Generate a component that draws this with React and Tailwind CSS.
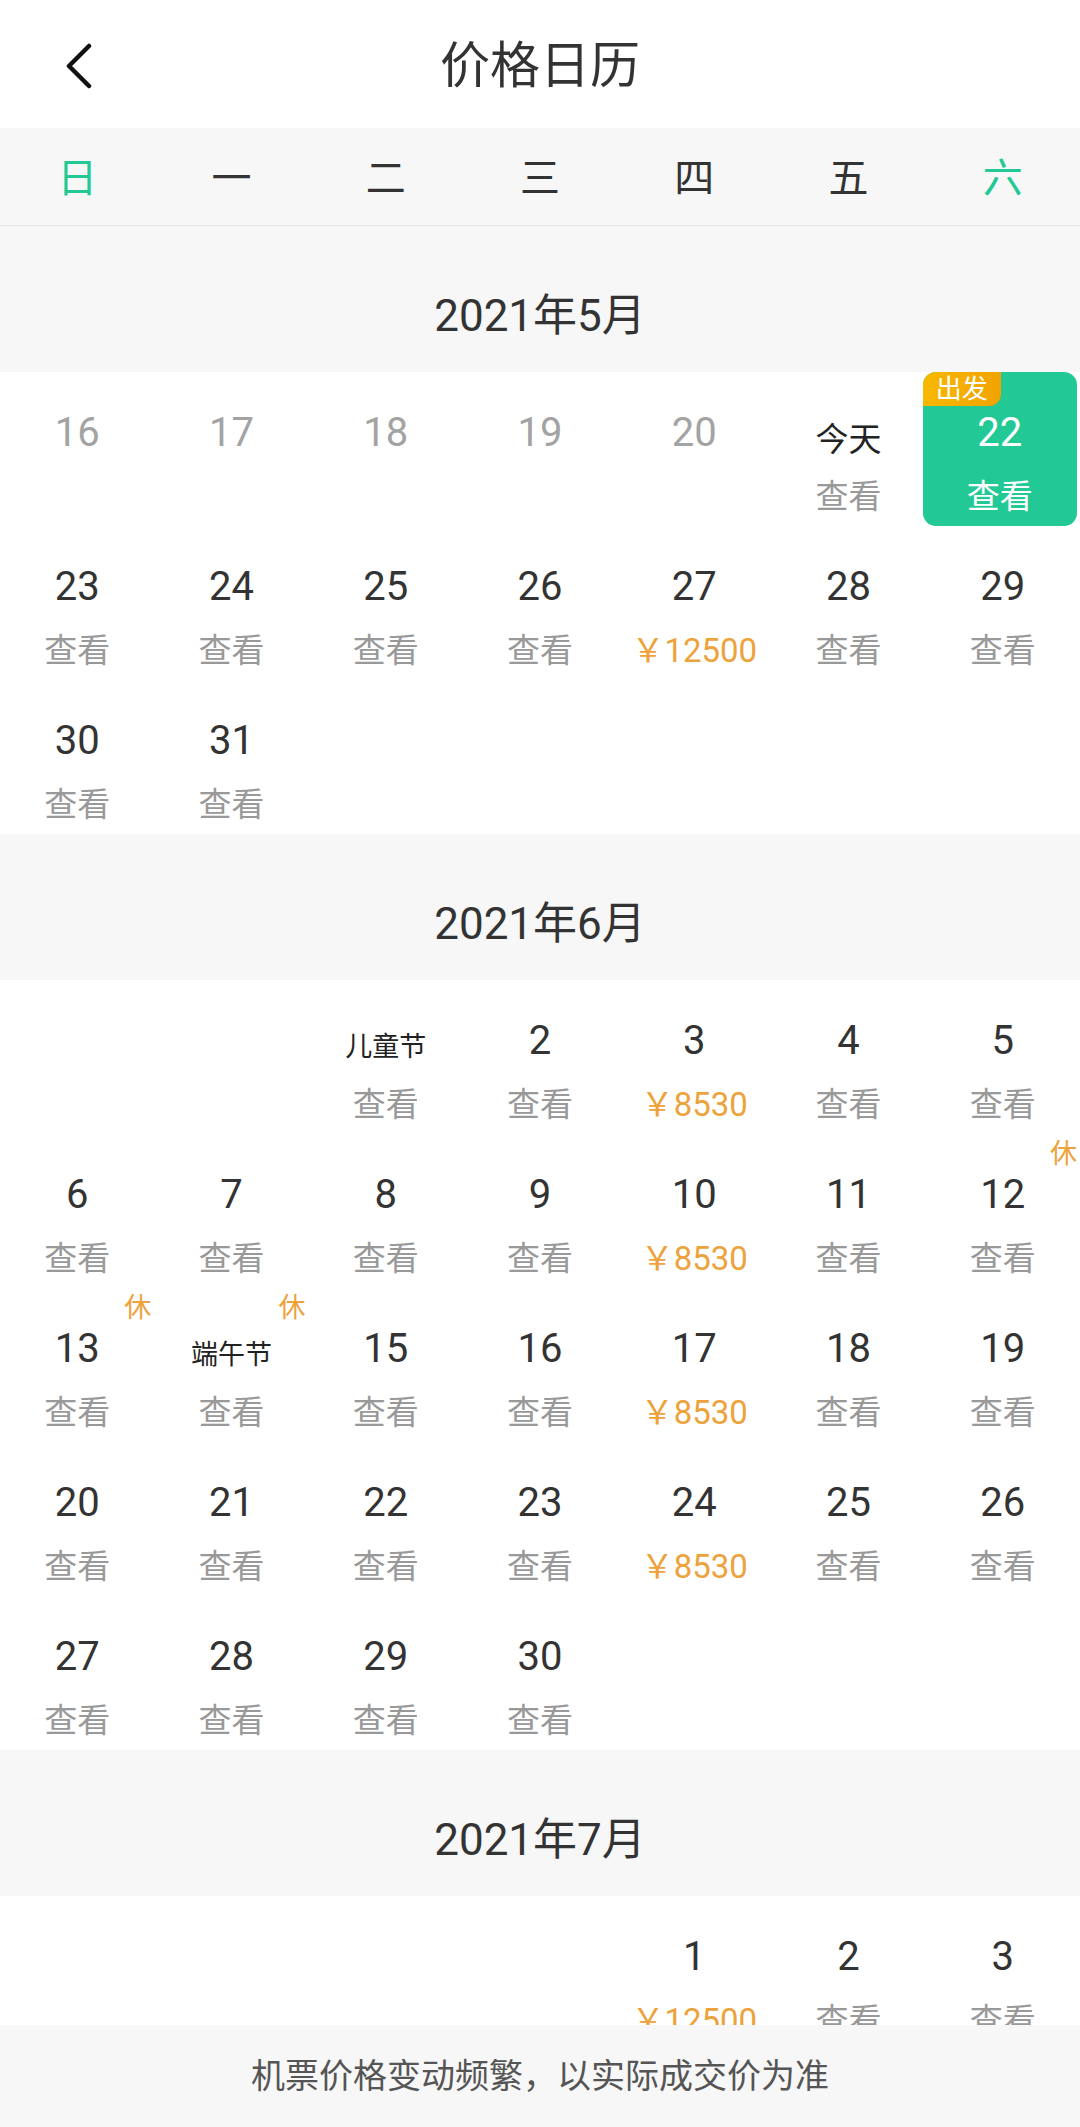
import React from "react";

const weekdays = ["日", "一", "二", "三", "四", "五", "六"];

// offset = empty cells before day 1 in the first shown week
const months = [
  { title: "2021年5月", start: 16, end: 31, offset: 0 },
  { title: "2021年6月", start: 1, end: 30, offset: 2 },
  { title: "2021年7月", start: 1, end: 3, offset: 4 },
];

const prices = {
  "5-27": "￥12500",
  "6-3": "￥8530",
  "6-10": "￥8530",
  "6-17": "￥8530",
  "6-24": "￥8530",
  "7-1": "￥12500",
};

const labels = {
  "5-21": { text: "今天", size: "text-[33px]" },
  "6-1": { text: "儿童节", size: "text-[27px]" },
  "6-14": { text: "端午节", size: "text-[27px]" },
};

const rest = ["6-12", "6-13", "6-14"];

function DayCell({ month, day }) {
  const key = `${month}-${day}`;
  const past = month === 5 && day <= 20;
  const selected = key === "5-22";
  const label = labels[key];
  const price = prices[key];

  return (
    <div
      className={`relative h-[154px] flex flex-col items-center pt-[38px] ${
        selected ? "bg-[#22c995] rounded-[13px] -ml-[3px] mr-[3px]" : ""
      }`}
    >
      {selected && (
        <div className="absolute left-0 top-0 w-[78px] h-[34px] bg-gradient-to-r from-[#f8b800] to-[#f1a300] rounded-tl-[13px] rounded-br-[12px] flex items-center justify-center text-white text-[26px] leading-none">
          出发
        </div>
      )}
      {rest.includes(key) && (
        <span className="absolute top-[7px] right-[3px] text-[27px] leading-none text-[#eda23c]">
          休
        </span>
      )}
      <div className="h-[46px] flex items-center justify-center">
        {label ? (
          <span className={`mt-[12px] leading-none text-[#222] ${label.size}`}>
            {label.text}
          </span>
        ) : (
          <span
            className={`text-[40px] leading-none ${
              selected ? "text-white" : past ? "text-[#a3a3a3]" : "text-[#333]"
            }`}
          >
            {day}
          </span>
        )}
      </div>
      {!past && (
        <div
          className={`mt-[21px] h-[40px] leading-[40px] text-[33px] ${
            selected ? "text-white" : price ? "text-[#eda23c]" : "text-[#999]"
          }`}
        >
          {price || "查看"}
        </div>
      )}
    </div>
  );
}

function Month({ month, index }) {
  const m = index + 5;
  const days = [];
  for (let d = month.start; d <= month.end; d++) days.push(d);

  return (
    <div>
      <div className="h-[146px] bg-[#f7f7f7] flex items-center justify-center pt-[34px] text-[44px] leading-none text-[#333]">
        {month.title}
      </div>
      <div className="grid grid-cols-7 bg-white">
        {Array.from({ length: month.offset }).map((_, i) => (
          <div key={`e${i}`} className="h-[154px]" />
        ))}
        {days.map((d) => (
          <DayCell key={d} month={m} day={d} />
        ))}
      </div>
    </div>
  );
}

export default function App() {
  return (
    <div className="w-[1080px] h-[2127px] flex flex-col bg-white font-['Roboto','Noto_Sans_CJK_SC',sans-serif]">
      {/* Header */}
      <div className="h-[128px] grid grid-cols-[128px_1fr_128px] items-center bg-white pt-[4px]">
        <div className="pl-[64px] flex items-center">
          <svg width="30" height="46" viewBox="0 0 30 46" fill="none">
            <path
              d="M25 3 L5 23 L25 43"
              stroke="#111"
              strokeWidth="4.5"
              strokeLinecap="round"
              strokeLinejoin="round"
            />
          </svg>
        </div>
        <div className="text-center text-[50px] leading-none text-[#333]">
          价格日历
        </div>
        <div />
      </div>

      {/* Weekdays */}
      <div className="h-[98px] grid grid-cols-7 items-center bg-[#f7f7f7] border-b border-[#e6e6e6] pt-[5px]">
        {weekdays.map((w, i) => (
          <div
            key={w}
            className={`text-center text-[40px] leading-none ${
              i === 0 || i === 6 ? "text-[#22c995]" : "text-[#333]"
            }`}
          >
            {w}
          </div>
        ))}
      </div>

      {/* Months */}
      <div className="flex-1 overflow-hidden">
        {months.map((mo, i) => (
          <Month key={mo.title} month={mo} index={i} />
        ))}
      </div>

      {/* Footer */}
      <div className="h-[102px] bg-[#f7f7f7] flex items-center justify-center text-[34px] text-[#555]">
        机票价格变动频繁，以实际成交价为准
      </div>
    </div>
  );
}
